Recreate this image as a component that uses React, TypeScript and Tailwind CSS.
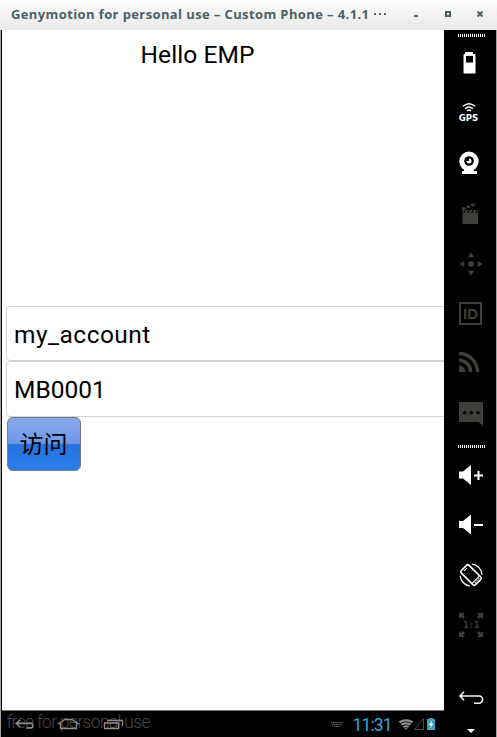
import React from "react";

const WHITE = "#fff";
const DIM = "#3f3f3b";

function Cell({ children }: { children: React.ReactNode }) {
  return (
    <svg className="block h-[50px] w-[52px] shrink-0" viewBox="0 0 52 50" fill="none">
      {children}
    </svg>
  );
}

function Grip() {
  return (
    <svg className="block h-[3px] w-[27px]" viewBox="0 0 27 3" shapeRendering="crispEdges">
      {Array.from({ length: 14 }, (_, i) => (
        <rect key={i} x={i * 2} y="0" width="1" height="3" fill="#fff" />
      ))}
    </svg>
  );
}

function Toolbar() {
  return (
    <aside className="flex w-[52px] shrink-0 flex-col overflow-hidden bg-black">
      <div className="flex h-2 shrink-0 pl-[14px] pt-1">
        <Grip />
      </div>
      <Cell>
        <path fill={WHITE} fillRule="evenodd" d="M21 14h8v2h1.500q1 0 1 1v18.500h-12V17q0-1 1-1h.5zM22 18v6.500h7V18z" />
      </Cell>
      <Cell>
        <g stroke={WHITE} strokeWidth="1.400">
          <path d="M19 18.300Q25 13.300 31 18.300M21 20.700Q25 17.200 29 20.700M23 23Q25 21 27 23" />
        </g>
        <text x="14.800" y="33.300" fill={WHITE} textLength="19.500" lengthAdjust="spacingAndGlyphs" className="font-['DejaVu_Sans',sans-serif] text-[9.500px] font-bold">GPS</text>
      </Cell>
      <Cell>
        <circle cx="25" cy="23.300" r="9.700" fill={WHITE} />
        <circle cx="25" cy="23" r="4.800" fill="#000" />
        <path d="M25 20.500v2.500h-2.500a2.500 2.500 0 1 0 2.500-2.500z" fill={WHITE} />
        <path d="M20 31h10v2h2q1 0 1 1v2H18v-2q0-1 1-1h1z" fill={WHITE} />
      </Cell>
      <Cell>
        <path d="M18.500 22H34v14H18.500z" fill={DIM} />
        <path d="m19.500 25 2-2.800m2 2.800 2-2.800m2 2.800 2-2.800m2 2.800 2-2.800" stroke="#000" strokeWidth="1.200" />
        <path d="m17.500 20 14-5.500 1 2.500-14 5.500z" fill={DIM} />
        <path d="m20 17.500 3.500 3.500m.5-5.500 3.500 3.500m1-5.500 3 3.500" stroke="#000" strokeWidth="1.300" />
      </Cell>
      <Cell>
        <circle cx="27" cy="26" r="2.800" fill={DIM} />
        <path fill={DIM} d="m27 14.200 3 5h-6zM27 37.800l3-5h-6zM15.200 26l5-3v6zM38.800 26l-5-3v6z" />
      </Cell>
      <Cell>
        <rect x="16" y="15" width="21" height="21" stroke={DIM} strokeWidth="2" />
        <text x="19" y="31.200" fill={DIM} textLength="15" lengthAdjust="spacingAndGlyphs" className="font-['Liberation_Sans',Arial,sans-serif] text-[15.500px] font-bold">ID</text>
      </Cell>
      <Cell>
        <path d="M15 15.500a18.500 18.500 0 0 1 18.500 18.500M15 22.300a11.700 11.700 0 0 1 11.700 11.700" stroke={DIM} strokeWidth="3.400" />
        <path d="M15 27.500a6.500 6.500 0 0 1 6.500 6.500H15z" fill={DIM} />
      </Cell>
      <Cell>
        <path d="M15 14h24v24l-4.500-4H15z" fill={DIM} />
        <g fill="#000">
          <circle cx="20.700" cy="24.700" r="1.800" />
          <circle cx="27.200" cy="24.700" r="1.800" />
          <circle cx="34" cy="24.700" r="1.800" />
        </g>
      </Cell>
      <div className="flex h-3 shrink-0 pl-[14px] pt-[7px]">
        <Grip />
      </div>
      <Cell>
        <path d="M15 21.500h4l8-6.500v20l-8-6.500h-4z" fill={WHITE} />
        <path d="M30 25.500h9M34.500 21v9" stroke={WHITE} strokeWidth="2" />
      </Cell>
      <Cell>
        <path d="M15 21h4l8-6.500v20L19 28h-4z" fill={WHITE} />
        <path d="M30 25h9" stroke={WHITE} strokeWidth="2" />
      </Cell>
      <Cell>
        <g stroke={WHITE}>
          <g transform="rotate(45 27 25)">
            <rect x="17" y="19.500" width="20" height="11" rx="1.800" strokeWidth="1.600" />
            <path d="M33.700 20v10M19.300 23v4" strokeWidth="1.100" />
            <path d="M35.300 21.500v1.500m0 1v1.500m0 1v1.500" strokeWidth="1" />
          </g>
          <path d="M28 14.200a11 11 0 0 1 10 10.500M16.200 26a11 11 0 0 0 9.800 10" strokeWidth="1.200" />
        </g>
      </Cell>
      <Cell>
        <path fill={DIM} d="M15 13h6l-2 2 2 2-2 2-2-2-2 2zM39 13h-6l2 2-2 2 2 2 2-2 2 2zM15 37h6l-2-2 2-2-2-2-2 2-2-2zM39 37h-6l2-2-2-2 2-2 2 2 2-2z" />
        <text x="19" y="28" fill={DIM} textLength="16.500" className="font-['DejaVu_Sans',sans-serif] text-[8px] font-bold">1:1</text>
      </Cell>
      <div className="h-[22px] shrink-0" />
      <Cell>
        <path d="M20 19.800 16 24l4 4.200M16 24h19a3.600 3.600 0 0 1 0 7.200h-5" stroke="#f5f5f5" strokeWidth="1.600" />
      </Cell>
      <svg className="block h-[15px] w-[52px] shrink-0" viewBox="0 0 52 15">
        <path d="M23 7h8l-4 4z" fill={WHITE} />
      </svg>
    </aside>
  );
}

function TitleBar() {
  return (
    <header className="flex h-[30px] shrink-0 items-center bg-gradient-to-b from-[#fdfdfd] to-[#e9e9e9] text-[#4b5f66]">
      <svg className="block h-[30px] w-[497px]" viewBox="0 0 497 30">
        <text x="11" y="19" fill="#4b5f66" textLength="358" className="font-['Open_Sans','Noto_Sans',sans-serif] text-[13px] font-bold">
          Genymotion for personal use – Custom Phone – 4.1.1
        </text>
        <g fill="#4b5f66" shapeRendering="crispEdges">
          <rect x="374" y="13" width="2" height="2" />
          <rect x="379" y="13" width="2" height="2" />
          <rect x="384" y="13" width="2" height="2" />
          <rect x="414" y="15" width="4" height="2" />
          <path fillRule="evenodd" d="M445 11h6v6h-6zM447 13v2h2v-2z" />
        </g>
        <path d="m477.500 11.500 5 5m0-5-5 5" stroke="#4b5f66" strokeWidth="2" />
      </svg>
    </header>
  );
}

function NavigationBar() {
  return (
    <footer className="h-[27px] shrink-0 border-t border-[#777] bg-black">
      <svg className="block h-[26px] w-[442px]" viewBox="2 711 442 26" fill="none">
        <text x="6.500" y="728" fill="#484848" textLength="144" className="font-['Roboto',sans-serif] text-[17.500px] font-light">free for personal use</text>
        <g stroke="#8c8c8c" strokeWidth="1.300">
          <path d="m20 720-4 3.500 4 3.500M16 723.500h15q2 0 2 2.200t-2 2.300h-5" />
          <path d="M59 723.500l6-4h7l6 4h-1.500v5h-16v-5z" />
          <path d="M104.500 723h14v5.500h-14zM107 720.500h15.500v5.500" />
        </g>
        <path d="M331 722.500h12M332 724.500h10M334 726.500h6" stroke="#686868" strokeWidth="1.200" strokeDasharray="1.500 .6" />
        <text x="352.500" y="730.500" fill="#33a7d5" textLength="40" className="font-['Roboto',sans-serif] text-[17.500px]">11:31</text>
        <path d="m406 730-7.300-8.700q7.300-4.300 14.600 0z" fill="#929292" />
        <path d="M400 723.700q6-3.700 12 0M402 726q4-2.700 8 0M404 728.200q2-1.300 4 0" stroke="#000" strokeWidth=".8" />
        <path d="M423.500 718.500v11h-9z" stroke="#484848" />
        <path d="M429 718h4v1h2v11h-8v-11h2z" fill="#3f9fc0" />
        <path d="m432 720.500-3.200 4.500h2l-1 3.500 3.700-4.700h-2.200z" fill="#fff" />
      </svg>
    </footer>
  );
}

function Screen() {
  return (
    <main className="flex w-[442px] shrink-0 flex-col bg-white font-['Roboto',sans-serif] text-[24.500px] text-black">
      <div className="flex h-[276px] shrink-0 justify-center pt-[10px] leading-[29px]">
        <h1 className="mr-[51px] tracking-[0.08px]">Hello EMP</h1>
      </div>
      <div className="flex grow flex-col items-start overflow-hidden pl-1">
        <div className="flex h-[55px] w-[450px] shrink-0 items-center rounded-[4px] border border-[#d3d3d8] pl-[7px] pt-[4px] tracking-[0.47px]">
          my_account
        </div>
        <div className="flex h-[56px] w-[450px] shrink-0 items-center rounded-[4px] border border-[#d3d3d8] pl-[7px] pt-[3px]">
          MB0001
        </div>
        <button className="ml-[1px] flex h-[54px] w-[74px] items-center justify-center rounded-[6px] border border-[#777b83] bg-[linear-gradient(#8aaaf0_0%,#6d98e7_49%,#2673e0_51%,#2d7de9_100%)] pb-[2px] pr-[1px] font-['Noto_Sans_CJK_SC',sans-serif] text-[24px] font-normal leading-none">
          访问
        </button>
      </div>
      <NavigationBar />
    </main>
  );
}

export default function App() {
  return (
    <div className="flex h-[737px] w-[497px] flex-col overflow-hidden">
      <TitleBar />
      <div className="flex min-h-0 grow border-l border-r border-[#a0a0a0]">
        <div className="w-px shrink-0 bg-black" />
        <Screen />
        <Toolbar />
      </div>
    </div>
  );
}
